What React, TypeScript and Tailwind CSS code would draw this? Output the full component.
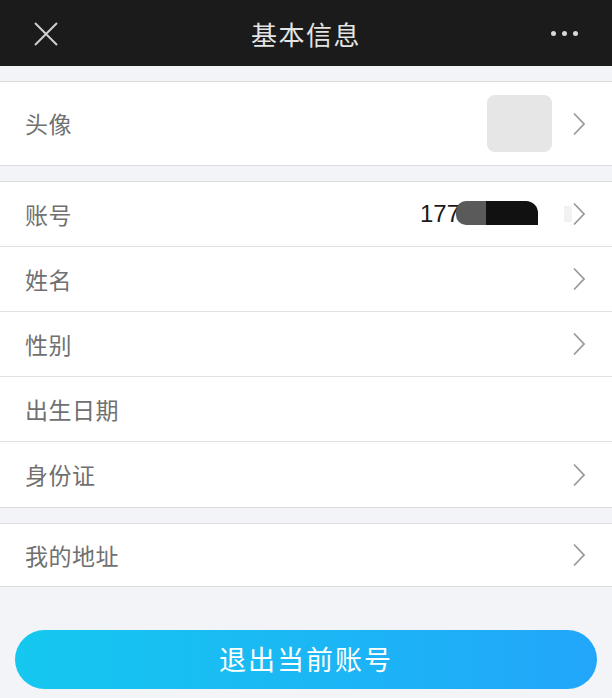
import { ReactNode } from 'react'

const Chevron = () => (
  <svg width="14" height="24" viewBox="0 0 14 24" className="shrink-0">
    <path d="M2 1.5 L12 12 L2 22.5" fill="none" stroke="#9a9a9a" strokeWidth="1.8" />
  </svg>
)

const Row = ({
  label,
  children,
  arrow = true,
  last = false,
  height = 'h-[65px]',
}: {
  label: string
  children?: ReactNode
  arrow?: boolean
  last?: boolean
  height?: string
}) => (
  <div className={`flex items-center bg-white pl-[25px] pr-[26px] ${height} ${last ? '' : 'border-b border-[#e2e2e4]'}`}>
    <span className="text-[23px] tracking-[0.5px] text-[#707070]">{label}</span>
    <div className="ml-auto flex items-center">
      {children}
      {arrow ? <Chevron /> : <span className="w-[14px]" />}
    </div>
  </div>
)

const Section = ({ children }: { children: ReactNode }) => (
  <div className="border-y border-[#dcdcde] bg-white">{children}</div>
)

export default function App() {
  return (
    <div
      className="flex h-[698px] w-[612px] flex-col overflow-hidden bg-[#f3f4f8]"
      style={{ fontFamily: '"Noto Sans CJK SC", "Noto Sans", sans-serif' }}
    >
      <header className="relative flex h-[66px] shrink-0 items-center justify-center bg-[#1b1b1b]">
        <svg width="24" height="24" viewBox="0 0 24 24" className="absolute left-[34px] top-[22px]">
          <path d="M1 1 L23 23 M23 1 L1 23" stroke="#cfcfcf" strokeWidth="2" />
        </svg>
        <h1 className="text-[26px] font-normal tracking-[1.5px] text-[#e4e4e4]">基本信息</h1>
        <div className="absolute right-[34px] top-[31px] flex gap-[6px]">
          <span className="h-[5px] w-[5px] rounded-full bg-[#d8d8d8]" />
          <span className="h-[5px] w-[5px] rounded-full bg-[#d8d8d8]" />
          <span className="h-[5px] w-[5px] rounded-full bg-[#d8d8d8]" />
        </div>
      </header>

      <div className="h-[15px] shrink-0" />

      <Section>
        <Row label="头像" last height="h-[83px]">
          <div className="mr-[20px] h-[57px] w-[65px] rounded-[8px] bg-[#e6e6e6]" />
        </Row>
      </Section>

      <div className="h-[15px] shrink-0" />

      <Section>
        <Row label="账号">
          <div className="flex items-center">
            <span className="text-[24px] text-[#1a1a1a]" style={{ fontFamily: '"Liberation Sans", sans-serif' }}>
              177
            </span>
            <div className="-ml-[4px] mb-[3px] flex h-[24px] w-[82px] overflow-hidden rounded-l-[10px] rounded-tr-[12px]">
              <div className="w-[30px] bg-[#5a5a5a]" />
              <div className="flex-1 bg-[#111]" />
            </div>
            <div className="ml-[26px] h-[16px] w-[8px] bg-[#f2f2f2]" />
          </div>
        </Row>
        <Row label="姓名" />
        <Row label="性别" />
        <Row label="出生日期" arrow={false} />
        <Row label="身份证" last />
      </Section>

      <div className="h-[15px] shrink-0" />

      <Section>
        <Row label="我的地址" last height="h-[62px]" />
      </Section>

      <div className="px-[15px] pt-[43px]">
        <button className="flex h-[59px] w-full items-center justify-center rounded-full bg-gradient-to-r from-[#15c8ef] to-[#22a6fa] text-[27px] tracking-[2px] text-white">
          退出当前账号
        </button>
      </div>
    </div>
  )
}
